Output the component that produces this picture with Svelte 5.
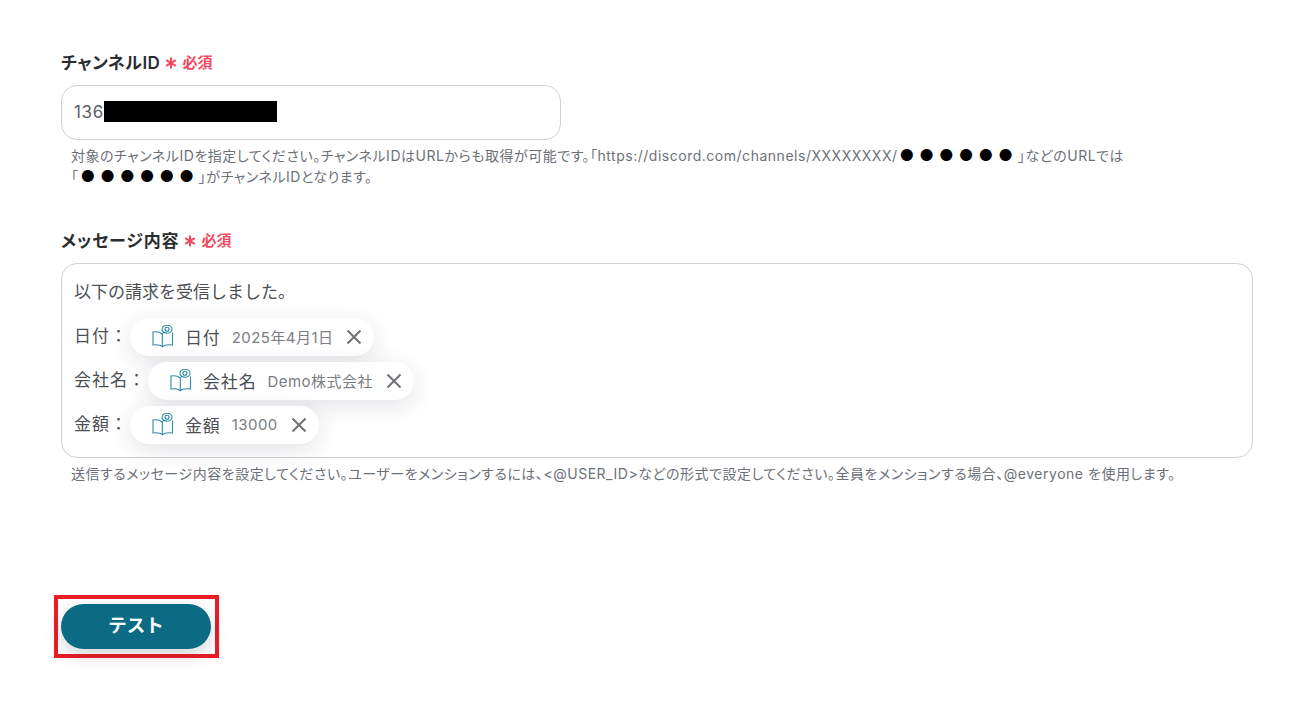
<script lang="ts">
  const rows = [
    { label: "日付：", name: "日付", value: "2025年4月1日" },
    { label: "会社名：", name: "会社名", value: "Demo株式会社" },
    { label: "金額：", name: "金額", value: "13000" },
  ];
</script>

<div class="page">
  <section class="field first">
    <div class="label">
      <span>チャンネルID</span>
      <svg class="star" width="12" height="12" viewBox="0 0 12 12" stroke="#f2485f" stroke-width="2" fill="none">
        <path d="M6 0.5 V11.5 M1.2 3.2 L10.8 8.8 M10.8 3.2 L1.2 8.8" />
      </svg>
      <span class="req">必須</span>
    </div>
    <div class="input">
      <span>136</span>
      <span class="mask"></span>
    </div>
    <p class="help">
      対象のチャンネルIDを指定してください。チャンネルIDはURLからも取得が可能です。「https://discord.com/channels/XXXXXXXX/<span class="dots">●●●●●●</span>」などのURLでは<br />「<span class="dots">●●●●●●</span>」がチャンネルIDとなります。
    </p>
  </section>

  <section class="field second">
    <div class="label">
      <span class="wide">メッセージ内容</span>
      <svg class="star" width="12" height="12" viewBox="0 0 12 12" stroke="#f2485f" stroke-width="2" fill="none">
        <path d="M6 0.5 V11.5 M1.2 3.2 L10.8 8.8 M10.8 3.2 L1.2 8.8" />
      </svg>
      <span class="req">必須</span>
    </div>
    <div class="textarea">
      <div class="line">以下の請求を受信しました。</div>
      {#each rows as row}
        <div class="row">
          <span class="row-label">{row.label}</span>
          <span class="chip">
            <svg class="book" width="24" height="24" viewBox="0 0 24 24" fill="none" stroke="#2f8aa6" stroke-width="1.1">
              <path d="M11.3 9 C9 7 5 6.5 2 7 V20 C5 19.5 9 19.5 11.3 21.5 Z" />
              <path d="M11.3 9 C12 8 12.5 7.6 13 7.3 M21.5 7.5 V20 C18 19.5 14 19.5 11.3 21.5" />
              <ellipse cx="16" cy="4.2" rx="5" ry="4" />
              <circle cx="16" cy="4.2" r="2" />
            </svg>
            <span class="chip-name">{row.name}</span>
            <span class="chip-value">{row.value}</span>
            <svg class="close" width="16" height="16" viewBox="0 0 16 16" stroke="#6f7276" stroke-width="2" fill="none">
              <path d="M1.5 1.5 L14.5 14.5 M14.5 1.5 L1.5 14.5" />
            </svg>
          </span>
        </div>
      {/each}
    </div>
    <p class="help">
      送信するメッセージ内容を設定してください。ユーザーをメンションするには、&lt;@USER_ID&gt;などの形式で設定してください。全員をメンションする場合、@everyone を使用します。
    </p>
  </section>

  <div class="actions">
    <button class="test">テスト</button>
  </div>
</div>

<style>
  :global(body) {
    background: #fff;
  }

  .page {
    padding: 48px 58px 47px 61px;
    font-family: Inter, "Noto Sans CJK JP", sans-serif;
    color: #2e3033;
  }

  .second {
    margin-top: 39px;
  }

  .label {
    display: flex;
    align-items: center;
    height: 26px;
    font-size: 17px;
    font-weight: 600;
    letter-spacing: 0.03em;
    font-feature-settings: "palt";
    color: #2b2d30;
    margin-bottom: 11px;
  }

  .wide {
    letter-spacing: 0.05em;
  }

  .star {
    margin: 3px 0 0 5px;
  }

  .req {
    margin-left: 5px;
    color: #f2485f;
    font-size: 15px;
    font-weight: 600;
    letter-spacing: 0;
  }

  .input {
    box-sizing: border-box;
    width: 500px;
    height: 55px;
    display: flex;
    align-items: center;
    padding: 0 0 2px 12px;
    border: 1px solid #cfd1d6;
    border-radius: 16px;
    font-size: 17px;
    letter-spacing: 0.04em;
    color: #5a5f66;
  }

  .mask {
    width: 173px;
    height: 21px;
    background: #000;
  }

  .help {
    margin: 5px 0 0 10px;
    font-size: 14px;
    line-height: 21px;
    letter-spacing: 0.037em;
    font-feature-settings: "palt";
    color: #6c7178;
  }

  .dots {
    color: #000;
    font-size: 16px;
    line-height: 0;
    letter-spacing: 5.1px;
    margin-left: 2px;
  }

  .textarea {
    box-sizing: border-box;
    height: 195px;
    border: 1px solid #cfd1d6;
    border-radius: 16px;
    padding: 13px 12px 12px;
    font-size: 17px;
    color: #4b4f55;
  }

  .line {
    height: 30px;
    line-height: 30px;
    margin-bottom: 11px;
  }

  .row {
    display: flex;
    align-items: center;
    height: 38px;
    margin-bottom: 6px;
  }

  .row-label {
    margin-bottom: 5px;
    letter-spacing: 1px;
  }

  .chip {
    display: inline-flex;
    align-items: center;
    height: 38px;
    margin-left: 2px;
    padding: 0 12px 0 21px;
    border-radius: 19px;
    background: #fff;
    box-shadow: 0 6px 24px rgba(30, 40, 60, 0.13);
  }

  .book {
    flex: none;
  }

  .chip-name {
    margin: 0 0 2px 10px;
    letter-spacing: 0.05em;
    color: #4b4f55;
  }

  .chip-value {
    margin: 0 0 1px 11px;
    font-size: 15px;
    letter-spacing: 0.03em;
    color: #7a7d82;
  }

  .close {
    margin-left: 13px;
  }

  .actions {
    width: fit-content;
    margin: 111px 0 0 -7px;
    padding: 5px 4px 5px 3px;
    border: 4px solid #ec1c24;
  }

  .test {
    display: block;
    width: 150px;
    height: 45px;
    padding: 0 0 5px;
    border: none;
    border-radius: 23px;
    background: #0b6a84;
    color: #fff;
    font-family: inherit;
    font-size: 18.5px;
    font-weight: 700;
    box-shadow: 0 6px 18px rgba(30, 40, 60, 0.2);
  }
</style>
